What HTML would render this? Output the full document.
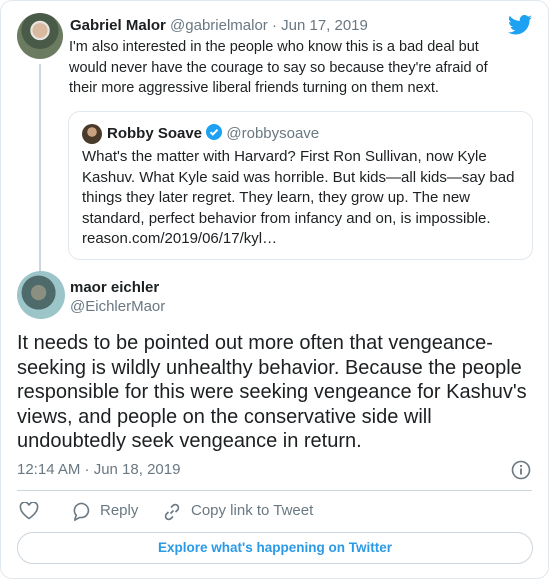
<!DOCTYPE html><html><head><style>
body{margin:0;width:550px;height:580px;background:#fff;font-family:"Liberation Sans",Arial,sans-serif;color:#1c2022;position:relative;overflow:hidden}
.card{position:absolute;left:0;top:0;width:547px;height:577px;border:1px solid #e1e8ed;border-radius:12px}
.abs{position:absolute}
.av{border-radius:50%;position:absolute}
.g{color:#697882}
</style></head><body>
<div class="card"></div>
<div class="av" style="left:17px;top:13px;width:46px;height:46px;background:radial-gradient(circle at 50% 38%,#d9b9a0 0 20%,#e8e4e0 21% 26%,#4a5a48 27% 50%,#6b7b60 51%)"></div>
<div class="abs" style="left:39px;top:64px;width:2px;height:208px;background:#ccd6dd"></div>
<div class="abs" style="left:70px;top:16px;font-size:15px;line-height:20px;white-space:nowrap"><b>Gabriel Malor</b> <span class="g">@gabrielmalor · Jun 17, 2019</span></div>
<svg class="abs" style="left:508px;top:15px" width="24" height="20" viewBox="0 0 24 20"><path fill="#1da1f2" d="M24 2.4a9.8 9.8 0 0 1-2.8.8A4.9 4.9 0 0 0 23.3.4a9.8 9.8 0 0 1-3.1 1.2A4.9 4.9 0 0 0 11.8 6 14 14 0 0 1 1.7.9a4.9 4.9 0 0 0 1.5 6.6 4.9 4.9 0 0 1-2.2-.6 4.9 4.9 0 0 0 3.9 4.9 4.9 4.9 0 0 1-2.2.1 4.9 4.9 0 0 0 4.6 3.4A9.9 9.9 0 0 1 0 17.3 14 14 0 0 0 7.5 19.5c9.1 0 14-7.5 14-14v-.6A10 10 0 0 0 24 2.4z"/></svg>
<div class="abs" style="left:69px;top:37px;font-size:14.5px;line-height:20.5px;width:425px">I'm also interested in the people who know this is a bad deal but would never have the courage to say so because they're afraid of their more aggressive liberal friends turning on them next.</div>
<div class="abs" style="left:68px;top:111px;width:463px;height:147px;border:1px solid #e1e8ed;border-radius:12px"></div>
<div class="av" style="left:82px;top:124px;width:20px;height:20px;background:radial-gradient(circle at 50% 40%,#c9a080 0 30%,#4a3a2a 31%)"></div>
<div class="abs" style="left:107px;top:124px;font-size:15px;line-height:20px;white-space:nowrap"><b>Robby Soave</b> <svg width="16" height="16" viewBox="0 0 16 16" style="vertical-align:-2px"><circle cx="8" cy="8" r="8" fill="#1da1f2"/><path d="M4.5 8.2l2.3 2.3 4.7-4.8" stroke="#fff" stroke-width="2" fill="none"/></svg> <span class="g">@robbysoave</span></div>
<div class="abs" style="left:82px;top:147px;font-size:15px;line-height:20.5px;width:440px">What's the matter with Harvard? First Ron Sullivan, now Kyle Kashuv. What Kyle said was horrible. But kids—all kids—say bad things they later regret. They learn, they grow up. The new standard, perfect behavior from infancy and on, is impossible. reason.com/2019/06/17/kyl…</div>
<div class="av" style="left:17px;top:271px;width:48px;height:48px;background:radial-gradient(circle at 45% 45%,#8a8f80 0 20%,#4f6a6a 21% 45%,#9bc5c8 46%)"></div>
<div class="abs" style="left:70px;top:278px;font-size:15px;line-height:20px"><b>maor eichler</b></div>
<div class="abs g" style="left:70px;top:297px;font-size:15px;line-height:20px">@EichlerMaor</div>
<div class="abs" style="left:17px;top:331px;font-size:20px;line-height:24.5px;width:520px">It needs to be pointed out more often that vengeance-seeking is wildly unhealthy behavior. Because the people responsible for this were seeking vengeance for Kashuv's views, and people on the conservative side will undoubtedly seek vengeance in return.</div>
<div class="abs g" style="left:17px;top:460px;font-size:15px;line-height:20px">12:14 AM · Jun 18, 2019</div>
<svg class="abs" style="left:511px;top:460px" width="20" height="20" viewBox="0 0 20 20"><circle cx="10" cy="10" r="8.5" stroke="#697882" stroke-width="1.6" fill="none"/><rect x="9.1" y="8.5" width="1.8" height="6" fill="#697882"/><circle cx="10" cy="6" r="1.1" fill="#697882"/></svg>
<div class="abs" style="left:17px;top:490px;width:515px;height:1px;background:#ccd6dd"></div>
<svg class="abs" style="left:19px;top:502px" width="20" height="18" viewBox="0 0 20 18"><path d="M10 16.5S1.5 11 1.5 5.5A4 4 0 0 1 10 3.5a4 4 0 0 1 8.5 2C18.5 11 10 16.5 10 16.5z" stroke="#697882" stroke-width="1.6" fill="none"/></svg>
<svg class="abs" style="left:71px;top:502px" width="20" height="20" viewBox="0 0 20 20"><path d="M4 16.5l1.3-3.2A7 7 0 1 1 10 15.5H8.5L4 18z" stroke="#697882" stroke-width="1.6" fill="none"/></svg>
<div class="abs g" style="left:100px;top:501px;font-size:15px;line-height:20px">Reply</div>
<svg class="abs" style="left:162px;top:502px" width="20" height="20" viewBox="0 0 20 20"><path d="M8.5 11.5l3-3M9 5.5l2-2a3 3 0 0 1 4.5 4.5l-2 2M11 14.5l-2 2A3 3 0 0 1 4.5 12l2-2" stroke="#697882" stroke-width="1.6" fill="none"/></svg>
<div class="abs g" style="left:191px;top:501px;font-size:15px;line-height:20px">Copy link to Tweet</div>
<div class="abs" style="left:17px;top:532px;width:514px;height:30px;border:1px solid #ccd6dd;border-radius:16px;text-align:center;font-size:13.5px;line-height:30px;font-weight:bold;color:#2b9ae6">Explore what's happening on Twitter</div>
</body></html>
